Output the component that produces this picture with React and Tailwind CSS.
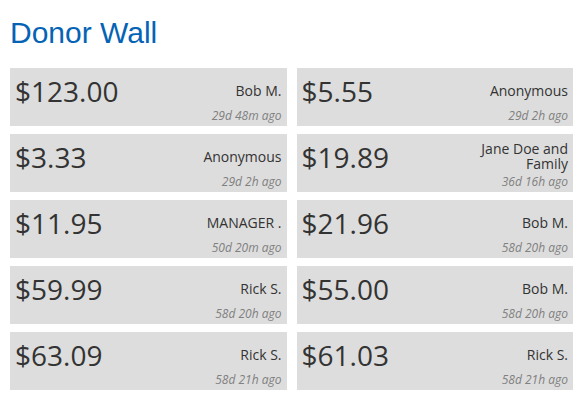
const donations = [
  { amount: '$123.00', name: 'Bob M.', when: '29d 48m ago' },
  { amount: '$5.55', name: 'Anonymous', when: '29d 2h ago' },
  { amount: '$3.33', name: 'Anonymous', when: '29d 2h ago' },
  { amount: '$19.89', name: 'Jane Doe and Family', when: '36d 16h ago' },
  { amount: '$11.95', name: 'MANAGER .', when: '50d 20m ago' },
  { amount: '$21.96', name: 'Bob M.', when: '58d 20h ago' },
  { amount: '$59.99', name: 'Rick S.', when: '58d 20h ago' },
  { amount: '$55.00', name: 'Bob M.', when: '58d 20h ago' },
  { amount: '$63.09', name: 'Rick S.', when: '58d 21h ago' },
  { amount: '$61.03', name: 'Rick S.', when: '58d 21h ago' },
]

const Card = ({ amount, name, when }) => {
  return (
    <div className="flex justify-between h-[58px] bg-[#dddddd] px-[5px] pt-[3px] pb-[4px]">
      <div className="text-[28px] leading-[40px] text-[#333333]">{amount}</div>
      <div className="flex flex-col items-end h-full text-right">
        <div className="flex-1 min-h-0 flex flex-col justify-center items-end">
          <div className="max-w-[110px] text-[14px] leading-[15px] text-[#333333]">{name}</div>
        </div>
        <div className="text-[12px] leading-[13px] italic text-[#808080]">{when}</div>
      </div>
    </div>
  )
}

export default function App() {
  return (
    <div className="w-[585px] h-[408px] bg-white px-[10px]" style={{ fontFamily: '"Open Sans", sans-serif' }}>
      <h1 className="pt-[15px] h-[68px] text-[30px] leading-[36px] text-[#0563b5]" style={{ fontFamily: '"Liberation Sans", Arial, sans-serif' }}>
        Donor Wall
      </h1>
      <div className="grid grid-cols-2 gap-x-[10px] gap-y-[8px] w-[563px]">
        {donations.map((d, i) => (
          <Card key={i} {...d} />
        ))}
      </div>
    </div>
  )
}
